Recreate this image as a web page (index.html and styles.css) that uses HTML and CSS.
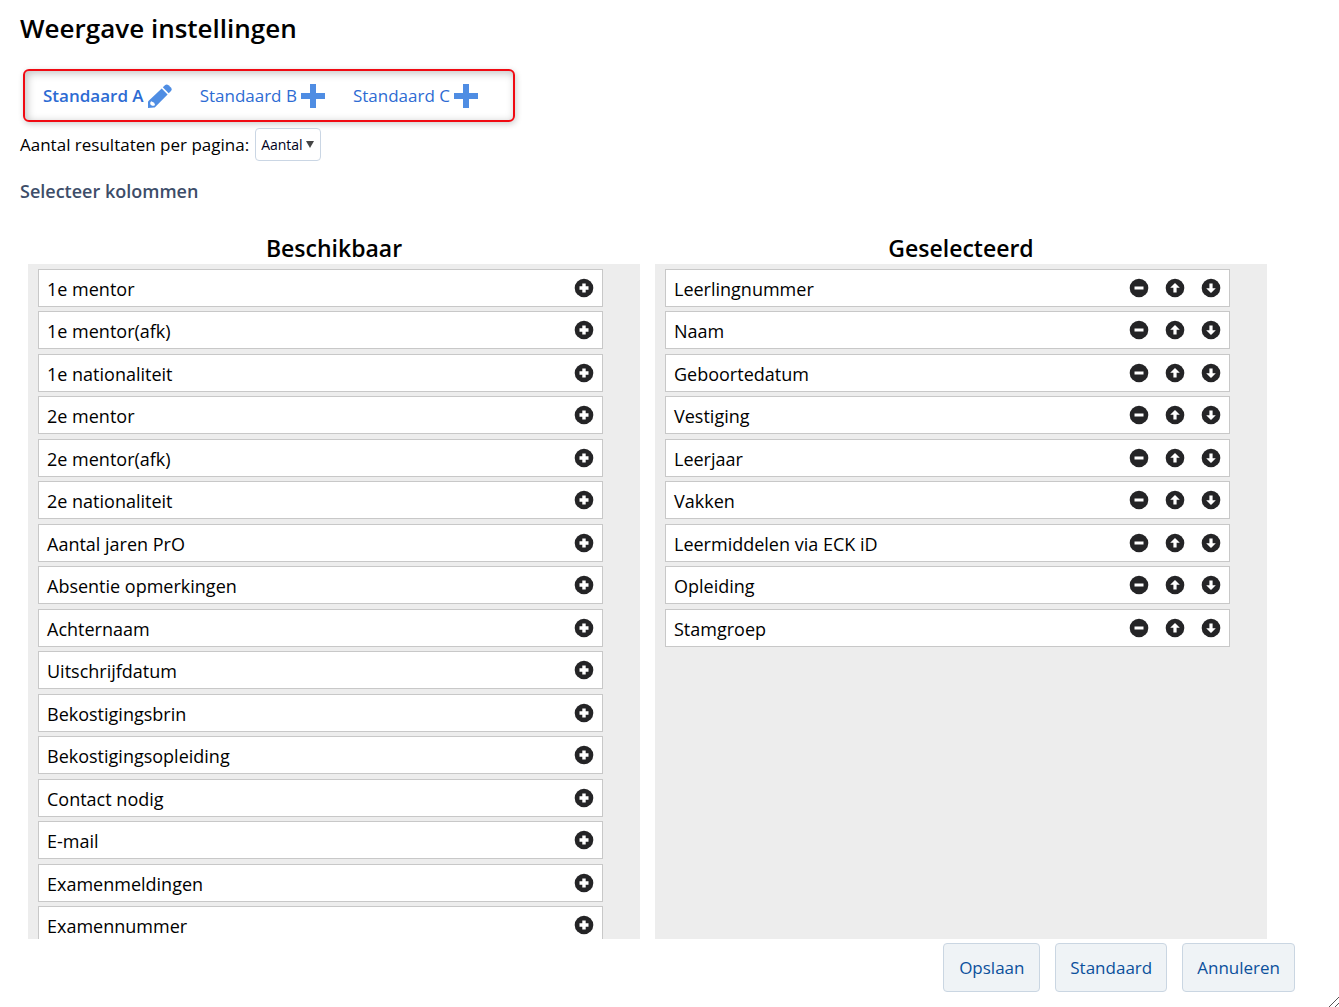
FILE: index.html
```html
<!DOCTYPE html>
<html lang="nl">
<head>
  <meta charset="UTF-8">
  <title>Weergave instellingen</title>
  <link rel="stylesheet" href="styles.css">
</head>
<body>

<svg class="sprite" aria-hidden="true">
  <symbol id="plus" viewBox="0 0 24 24">
    <path d="M9 0h6v9h9v6h-9v9H9v-9H0V9h9z"/>
  </symbol>
  <symbol id="pencil" viewBox="0 0 24 24">
    <path d="M14.800 3.300 17.200 1Q18.800-.3 20.500 1.200L22.900 3.600Q24.500 5.300 23 7L20.700 9.300z"/>
    <path fill-rule="evenodd" d="M13.700 4.400 19.600 10.400 7.200 22.900Q6.700 23.400 6 23.500L0 24V18Q.2 17.200.7 16.700zM3.200 17.200Q1.900 18.300 2.200 20.200L4 21.800Q6 22.100 7 20.900L6.200 18.700z"/>
  </symbol>
  <symbol id="add" viewBox="0 0 20 20">
    <circle cx="10" cy="10" r="9.300"/>
    <path class="mark" d="M8.300 5.500h3.400v2.800h2.800v3.400h-2.800v2.800H8.300v-2.800H5.500V8.300h2.800z"/>
  </symbol>
  <symbol id="remove" viewBox="0 0 20 20">
    <circle cx="10" cy="10" r="9.300"/>
    <path class="mark" d="M5.500 8.500h9v3h-9z"/>
  </symbol>
  <symbol id="up" viewBox="0 0 20 20">
    <circle cx="10" cy="10" r="9.300"/>
    <path class="mark" d="M10 5l4.800 4.800h-3.200v4.700H8.400V9.800H5.200z"/>
  </symbol>
  <symbol id="down" viewBox="0 0 20 20">
    <circle cx="10" cy="10" r="9.300"/>
    <path class="mark" d="M10 15l4.800-4.800h-3.200V5.500H8.400v4.700H5.200z"/>
  </symbol>
</svg>

<div class="dialog">
  <h1>Weergave instellingen</h1>

  <nav class="views">
    <a href="#a" class="active">Standaard A<svg><use href="#pencil"/></svg></a>
    <a href="#b">Standaard B<svg><use href="#plus"/></svg></a>
    <a href="#c">Standaard C<svg><use href="#plus"/></svg></a>
  </nav>

  <div class="page-size">
    <label for="amount">Aantal resultaten per pagina:</label>
    <span class="select">
      <select id="amount">
        <option>Aantal</option>
      </select>
      <svg viewBox="0 0 8 7"><path d="M0 0h8L4 7z"/></svg>
    </span>
  </div>

  <h2>Selecteer kolommen</h2>

  <div class="columns">
    <section class="column">
      <h3>Beschikbaar</h3>
      <ul class="list" id="available"></ul>
    </section>
    <section class="column">
      <h3>Geselecteerd</h3>
      <ul class="list" id="selected"></ul>
    </section>
  </div>

  <div class="actions">
    <button type="button">Opslaan</button>
    <button type="button">Standaard</button>
    <button type="button">Annuleren</button>
  </div>

  <svg class="resize" viewBox="0 0 11 10"><path d="M1 10 11 0M7 10l4-4"/></svg>
</div>

<script>
  const available = [
    '1e mentor', '1e mentor(afk)', '1e nationaliteit',
    '2e mentor', '2e mentor(afk)', '2e nationaliteit',
    'Aantal jaren PrO', 'Absentie opmerkingen', 'Achternaam',
    'Uitschrijfdatum', 'Bekostigingsbrin', 'Bekostigingsopleiding',
    'Contact nodig', 'E-mail', 'Examenmeldingen', 'Examennummer'
  ];
  const selected = [
    'Leerlingnummer', 'Naam', 'Geboortedatum', 'Vestiging', 'Leerjaar',
    'Vakken', 'Leermiddelen via ECK iD', 'Opleiding', 'Stamgroep'
  ];
  const labels = { add: 'Toevoegen', remove: 'Verwijderen', up: 'Omhoog', down: 'Omlaag' };

  function fill(id, names, icons) {
    document.getElementById(id).innerHTML = names.map(name => `
      <li>
        <span>${name}</span>
        ${icons.map(icon => `<button type="button" aria-label="${labels[icon]}: ${name}"><svg><use href="#${icon}"/></svg></button>`).join('')}
      </li>`).join('');
  }

  fill('available', available, ['add']);
  fill('selected', selected, ['remove', 'up', 'down']);
</script>

</body>
</html>
```

FILE: styles.css
```css
* {
  box-sizing: border-box;
}

body {
  margin: 0;
  font-family: "Open Sans", sans-serif;
  font-size: 17px;
  line-height: 24px;
  color: #000;
  background: #fff;
}

h1, h2, h3 {
  margin: 0;
  font-weight: 600;
}

button, select {
  font-family: inherit;
  cursor: pointer;
}

.sprite {
  display: none;
}

.dialog {
  position: relative;
  display: flex;
  flex-direction: column;
  height: 100vh;
  padding: 11px 20px 15px;
}

h1 {
  font-size: 26px;
  line-height: 34px;
}

.views {
  display: flex;
  align-items: center;
  align-self: flex-start;
  gap: 28px;
  height: 53px;
  margin: 24px 0 6px 3px;
  padding: 0 35px 0 18px;
  border: 2px solid #f00a12;
  border-radius: 6px;
  box-shadow: 1px 2px 6px rgba(0, 0, 0, 0.2), inset 2px 2px 8px rgba(0, 0, 0, 0.25);
}

.views a {
  display: flex;
  align-items: center;
  gap: 4px;
  color: #2d6bd3;
  text-decoration: none;
}

.views .active {
  font-weight: 600;
}

.views svg {
  width: 24px;
  height: 24px;
  fill: #4f8de3;
}

.page-size {
  display: flex;
  align-items: center;
  gap: 6px;
}

.select {
  position: relative;
}

.select select {
  display: block;
  appearance: none;
  width: 66px;
  height: 33px;
  padding: 0 5px;
  border: 1px solid #cad6e4;
  border-radius: 4px;
  background: #fff;
  color: #000020;
  font-size: 14px;
}

.select svg {
  position: absolute;
  top: 13px;
  right: 7px;
  width: 8px;
  height: 7px;
  fill: #444;
  pointer-events: none;
}

h2 {
  margin-top: 18px;
  font-size: 18px;
  color: #3d4d69;
}

.columns {
  display: flex;
  flex: 1;
  gap: 15px;
  min-height: 0;
  margin: 29px 52px 4px 8px;
}

.column {
  display: flex;
  flex: 1;
  flex-direction: column;
}

h3 {
  font-size: 23px;
  line-height: 32px;
  text-align: center;
}

.list {
  flex: 1;
  min-height: 0;
  margin: 0;
  padding: 5px 37px 0 10px;
  overflow: hidden;
  list-style: none;
  font-size: 18px;
  background: #ededed;
}

.list li {
  display: flex;
  align-items: center;
  gap: 16px;
  height: 38px;
  margin-bottom: 4px;
  padding: 0 8px;
  border: 1px solid #c8c8c8;
  background: #fff;
}

.list li:nth-child(even) {
  margin-bottom: 5px;
}

.list span {
  flex: 1;
  padding-top: 2px;
}

.list button {
  padding: 0;
  border: none;
  background: none;
}

.list svg {
  display: block;
  width: 20px;
  height: 20px;
  fill: #242426;
}

.mark {
  fill: #fff;
}

.actions {
  display: flex;
  justify-content: flex-end;
  gap: 15px;
  margin-right: 24px;
}

.actions button {
  min-width: 97px;
  height: 49px;
  padding: 0 14px;
  border: 1px solid #cad6e2;
  border-radius: 4px;
  background: #eff3f6;
  color: #0b509c;
  font-size: 17px;
}

.resize {
  position: absolute;
  right: 0;
  bottom: 0;
  width: 11px;
  height: 10px;
  fill: none;
  stroke: #555;
}
```
